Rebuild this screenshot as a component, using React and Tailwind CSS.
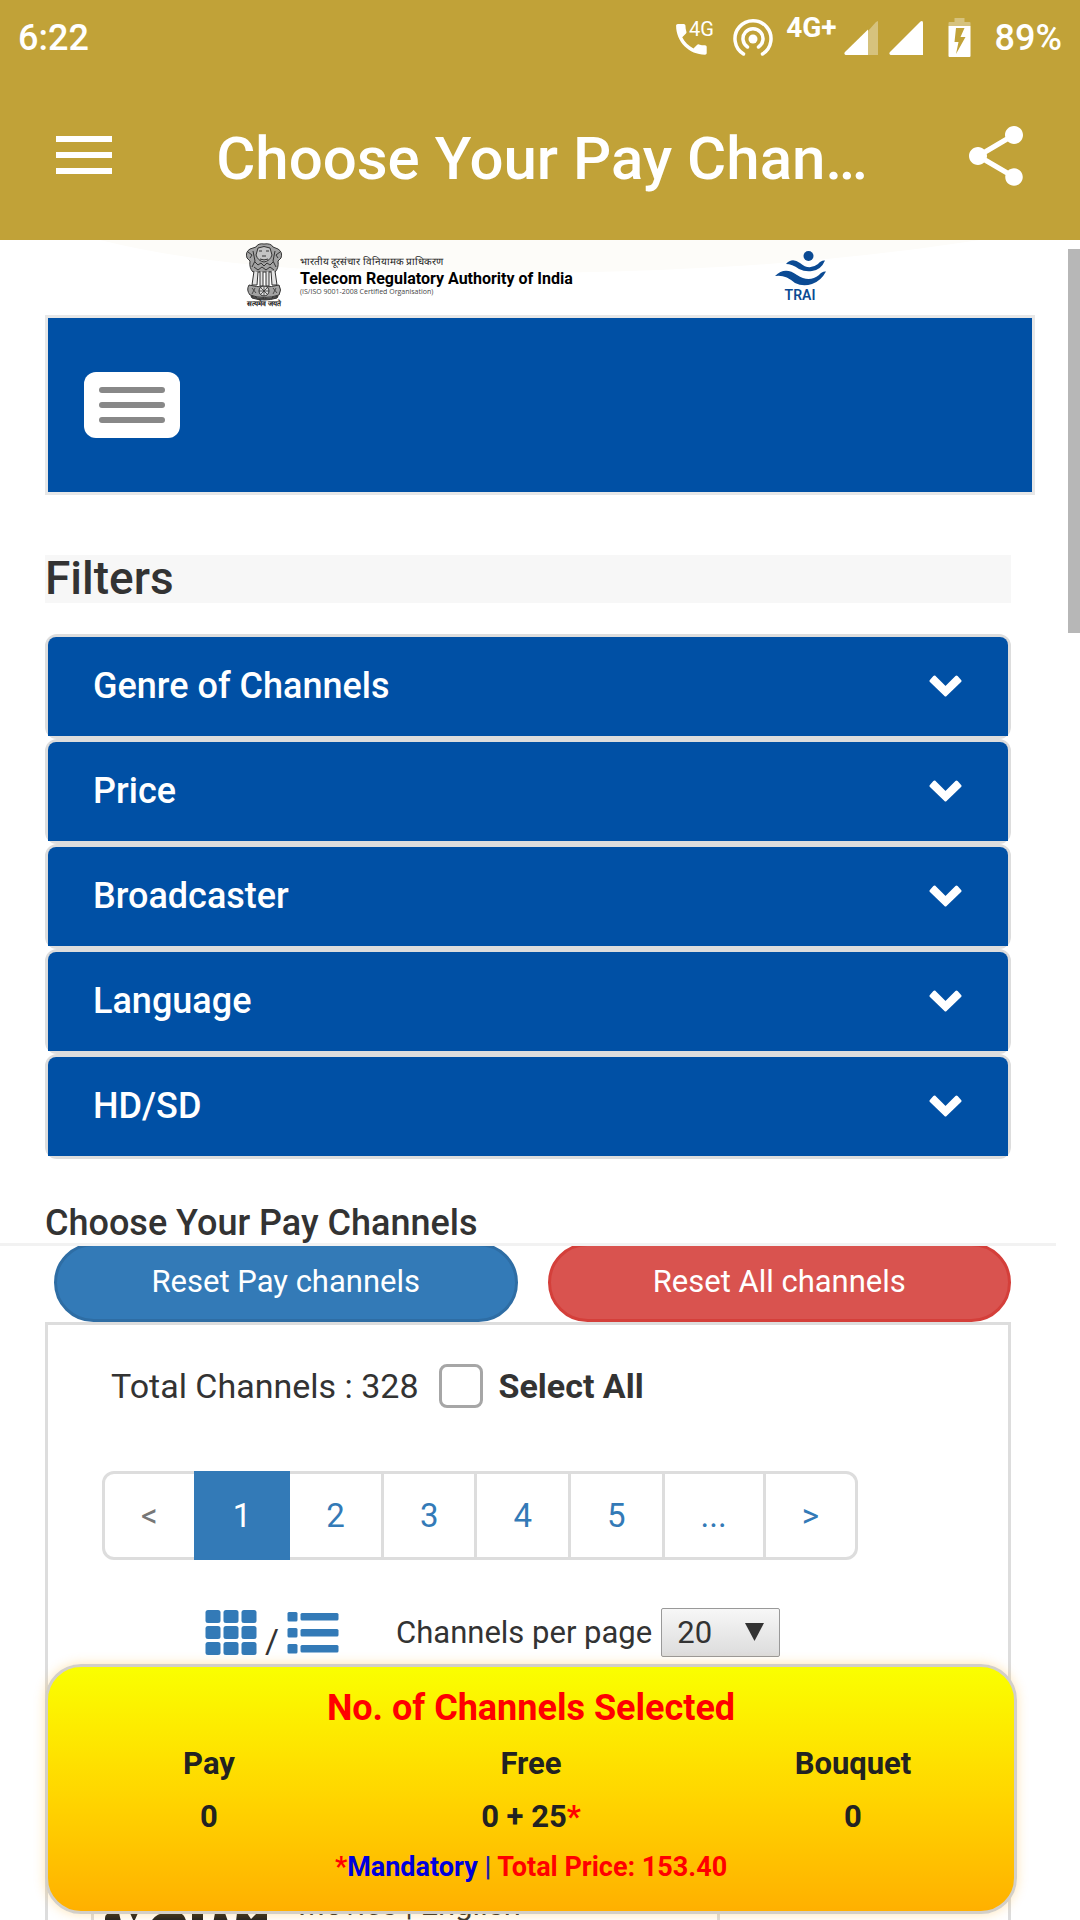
import React from "react";
import { MdShare, MdPhone } from "react-icons/md";

const filters = ["Genre of Channels", "Price", "Broadcaster", "Language", "HD/SD"];
const pages = ["<", "1", "2", "3", "4", "5", "...", ">"];
const counts = [
  { label: "Pay", value: "0" },
  { label: "Free", value: "0 + 25", mandatory: true },
  { label: "Bouquet", value: "0" },
];

function StatusBar() {
  return (
    <div className="flex h-[76px] items-center px-[18px] text-4xl font-medium text-white">
      <span>6:22</span>
      <div className="ml-auto flex items-center">
        <svg className="h-[40px] w-[40px]" viewBox="0 0 40 40" aria-hidden="true">
          <g transform="translate(-3 1) scale(1.7)">
            <MdPhone size={24} fill="#fff" />
          </g>
          <text x="15" y="18" fontSize="20" fontWeight="400" fill="#fff" fontFamily="Roboto, sans-serif">4G</text>
        </svg>
        <svg className="ml-[18px] h-[40px] w-[42px]" viewBox="0 0 42 40" fill="none" stroke="#fff" aria-hidden="true">
          <circle cx="21" cy="21" r="4.5" fill="#fff" stroke="none" />
          <path d="M11.5 36A18 18 0 1 1 30.500 36" strokeWidth="3.500" strokeLinecap="round" />
          <path d="M15.500 29A10 10 0 1 1 26.500 29" strokeWidth="3.500" strokeLinecap="round" />
        </svg>
        <span className="mb-5 ml-3 text-[28px] leading-[32px] font-bold">4G+</span>
        <svg className="ml-[7px] h-[36px] w-[34px]" viewBox="0 0 34 36" aria-hidden="true">
          <path d="M34 1V35H24V11L32 2Z" fill="#fff" fillOpacity=".35" />
          <path d="M24 9.500V35H1.500Q-.500 34 1 32Z" fill="#fff" />
        </svg>
        <svg className="ml-[11px] h-[36px] w-[34px]" viewBox="0 0 34 36" aria-hidden="true">
          <path d="M31.500 1.500Q34 0 34 3V35H1.500Q-.500 34 1 32Z" fill="#fff" />
        </svg>
        <svg className="ml-[25px] h-[40px] w-[23px]" viewBox="0 0 23 40" aria-hidden="true">
          <path d="M6.500 0H16.500V4H21.500Q22.500 4 22.500 5V8H.500V5Q.500 4 1.500 4H6.500Z" fill="#fff" fillOpacity=".35" />
          <path fillRule="evenodd" d="M.5 8H22.500V38Q22.500 39 21.500 39H1.500Q.500 39 .500 38ZM8 10 6.500 24H10.500L8 36 17.500 19H12.500L16.500 10Z" fill="#fff" />
        </svg>
        <span className="ml-6">89%</span>
      </div>
    </div>
  );
}

function AppBar() {
  return (
    <div className="flex h-[164px] items-center pr-12 pl-14 text-white">
      <button type="button" aria-label="Menu" className="mb-[6px] flex w-14 flex-col gap-[10px]">
        <span className="h-[6px] w-full bg-white" />
        <span className="h-[6px] w-full bg-white" />
        <span className="h-[6px] w-full bg-white" />
      </button>
      <h1 className="min-w-0 flex-1 pt-[2px] pl-3 text-center text-6xl leading-[72px] font-medium whitespace-nowrap">Choose Your Pay Chan…</h1>
      <button type="button" aria-label="Share" className="mb-1">
        <MdShare size={72} />
      </button>
    </div>
  );
}

function Emblem() {
  return (
    <svg className="h-[64px] w-[40px] shrink-0" viewBox="0 0 40 64" aria-hidden="true">
      <g fill="#a2a2a2" stroke="#333" strokeWidth="1">
        <path d="M12 4Q14 0 20 1Q27 0 29 4L34 6Q39 9 37 15L34 18Q35 25 31 29H9Q5 25 6 18L3 15Q1 9 6 6Z" />
        <path d="M14 5Q20 2 26 5L28 12Q26 18 20 19Q14 18 12 12Z" fill="#c4c4c4" />
        <path d="M15 8H18M22 8H25M18 13H22M16 16Q20 18 24 16" />
        <path d="M4 9 8 12 6 15M36 9 32 12 34 15M9 8 11 18 8 24M31 8 29 18 32 24" fill="none" />
        <path d="M11 19 14 22 17 20 20 23 23 20 26 22 29 19M10 24 14 27 18 24 22 27 26 24 30 27" fill="none" />
        <path d="M10 28 8 42H13L14 29M16 28V43H19V29M22 29V43H25V28M27 28 28 42H33L31 28" fill="#e2e2e2" />
        <path d="M5 42Q20 46 35 42Q38 47 35 52Q20 57 6 52Q2 47 5 42Z" />
        <circle cx="20" cy="48" r="5" fill="#ddd" />
        <path d="M20 43V53M15 48H25M16.500 44.500 23.500 51.500M23.500 44.500 16.500 51.500M8 45 12 50M11 45 8 51M29 45 33 50M32 45 29 51" strokeWidth=".8" />
        <path d="M7 53Q20 58 34 53L33 55Q20 59 8 55Z" fill="#555" />
      </g>
      <text x="20" y="63" fontSize="7" fontWeight="700" textAnchor="middle" fill="#111">सत्यमेव जयते</text>
    </svg>
  );
}

function SiteHeader() {
  return (
    <div className="relative flex h-[75px] items-start bg-white">
      <svg className="absolute inset-0 h-full w-full" viewBox="0 0 1080 75" preserveAspectRatio="none" aria-hidden="true">
        <path d="M100 0H980Q850 20 720 27Q560 36 400 32Q220 30 100 0Z" fill="#fdfcf9" />
      </svg>
      <div className="relative ml-[244px] flex items-start pt-[3px]">
        <Emblem />
        <div className="ml-4 whitespace-nowrap text-black">
          <p className="pt-[10px] text-[10px] leading-[18px] text-[#222]">भारतीय दूरसंचार विनियामक प्राधिकरण</p>
          <p className="text-[16px] leading-[16px] font-bold">Telecom Regulatory Authority of India</p>
          <p className="font-['Open_Sans'] text-[7px] leading-[10px] text-[#444]">(IS/ISO 9001-2008 Certified Organisation)</p>
        </div>
      </div>
      <svg className="relative ml-[200px] h-[64px] w-[56px] shrink-0" viewBox="0 0 56 64" fill="#0b4a93" role="img" aria-label="TRAI">
        <circle cx="35.500" cy="16" r="5" />
        <path d="M13 24Q19 17 27 23Q36 31 45 24Q48 20 52 20.500Q48 30 39 31Q32 32 26 29Q19 24 13 24Z" />
        <path d="M2 36Q12 26 24 35Q36 43 46 35Q49 31 53 31.500Q48 41 39 44Q30 47 22 43Q12 34 2 36Z" />
        <text x="27" y="60" fontSize="14" fontWeight="600" textAnchor="middle">TRAI</text>
      </svg>
    </div>
  );
}

function FilterPanel({ name }) {
  return (
    <button type="button" className="flex w-full rounded-xl border-[3px] border-[#ddd] text-left">
      <span className="flex h-[99px] w-full items-center rounded-t-lg bg-[#0050a5] pr-[46px] pb-[2px] pl-[45px] text-white">
        <span className="text-4xl leading-10 font-medium">{name}</span>
        <svg className="ml-auto h-[22px] w-[33px]" viewBox="0 0 33 22" fill="#fff" stroke="#fff" strokeWidth="3" strokeLinejoin="round" aria-hidden="true">
          <path d="M2 6 5.500 2 16.500 13 27.500 2 31 6 16.500 20Z" />
        </svg>
      </span>
    </button>
  );
}

function GridIcon() {
  return (
    <svg className="h-[45px] w-[52px]" viewBox="0 0 52 45" fill="#337ab7" aria-hidden="true">
      {[0, 16, 32].map((y) =>
        [0, 18, 36].map((x) => <rect key={x + "-" + y} x={x + 0.5} y={y} width="15" height="13" rx="2.500" />)
      )}
    </svg>
  );
}

function ListIcon() {
  return (
    <svg className="h-[45px] w-[52px]" viewBox="0 0 52 45" fill="#337ab7" aria-hidden="true">
      {[2, 18, 34].map((y) => (
        <g key={y}>
          <rect x="0.5" y={y} width="10" height="9.500" rx="1.500" />
          <rect x="13.500" y={y + 1} width="38" height="7.500" rx="1.500" />
        </g>
      ))}
    </svg>
  );
}

function Pagination() {
  return (
    <nav aria-label="Pages" className="mt-[63px] ml-[54px] flex text-[33px] leading-[47px] text-[#337ab7]">
      {pages.map((p) => {
        if (p === "1") {
          return (
            <a key={p} href="#page" aria-current="page" className="relative -ml-[3px] border-[3px] border-[#337ab7] bg-[#337ab7] px-9 py-[18px] text-white">{p}</a>
          );
        }
        if (p === "<") {
          return (
            <a key={p} href="#page" className="rounded-l-xl border-[3px] border-[#ddd] px-9 py-[18px] text-[#777]">{p}</a>
          );
        }
        return (
          <a key={p} href="#page" className="-ml-[3px] border-[3px] border-[#ddd] px-9 py-[18px] last:rounded-r-xl">{p}</a>
        );
      })}
    </nav>
  );
}

function ChannelList() {
  return (
    <section className="mr-[69px] ml-[45px] border-[3px] border-[#ddd] text-[#333]">
      <div className="flex items-center pt-[39px] pl-[63px] text-[34px] leading-[44px]">
        <span>Total Channels : 328</span>
        <label className="ml-5 flex items-center font-bold">
          <input type="checkbox" className="mr-4 h-[44px] w-[44px] appearance-none rounded-lg border-[3px] border-[#a6a6a6] bg-white" />
          Select All
        </label>
      </div>
      <Pagination />
      <div className="mt-12 flex h-[49px] items-center pl-[157px] text-[31px]">
        <button type="button" aria-label="Grid view"><GridIcon /></button>
        <span className="mx-2 pt-4 text-[34px] leading-10">/</span>
        <button type="button" aria-label="List view"><ListIcon /></button>
        <label htmlFor="per-page" className="ml-[57px] pt-[2px]">Channels per page</label>
        <div className="relative ml-[9px]">
          <select id="per-page" defaultValue="20" className="h-[49px] w-[119px] appearance-none rounded-xs border border-[#999] bg-gradient-to-b from-[#f7f7f7] to-[#dcdcdc] pl-[15px] text-[31px] leading-10 text-[#333]">
            <option>20</option>
            <option>50</option>
          </select>
          <svg className="pointer-events-none absolute top-[15px] right-4 h-[18px] w-[19px]" viewBox="0 0 19 18" fill="#333" aria-hidden="true">
            <path d="M0 0H19L9.500 18Z" />
          </svg>
        </div>
      </div>
      <article className="mt-[120px] mr-[288px] ml-[43px] flex border-[3px] border-[#ddd] pl-[11px]">
        <svg className="h-[150px] w-[162px]" viewBox="0 0 162 150" aria-hidden="true">
          <path d="M0 138Q0 133 7 133H14L18 150H0ZM25 133H33L29 142ZM42 150Q48 133 60 133H74Q82 134 82 150ZM87 133H98V150H87ZM110 133H120L126 150H107ZM132 133H142L146 139 152 133H162V150H130Z" fill="#222" />
        </svg>
        <p className="mt-[105px] ml-[31px] text-[31px] leading-10">Movies | English</p>
      </article>
    </section>
  );
}

function SelectionSummary() {
  return (
    <aside className="absolute bottom-[6px] left-[45px] w-9/10 rounded-[36px] border-[3px] border-[#d3cfc8] bg-gradient-to-b from-[#faff00] to-[#ffb000] pt-[21px] pb-6 text-center font-bold text-[#222] shadow-[0_0_12px_rgba(255,165,0,0.3)]">
      <h2 className="text-4xl leading-10 text-[#f00]">No. of Channels Selected</h2>
      <div className="mt-4 grid grid-cols-3 text-[31px] leading-10">
        {counts.map((c) => (
          <div key={c.label}>
            <p>{c.label}</p>
            <p className="mt-[13px]">
              {c.value}
              {c.mandatory && <span className="text-[#f00]">*</span>}
            </p>
          </div>
        ))}
      </div>
      <p className="mt-[10px] text-[27px] leading-10 text-[#f00]">
        *<span className="text-[#00d]">Mandatory</span> <span className="text-[#22a]">|</span> Total Price: 153.40
      </p>
    </aside>
  );
}

export default function App() {
  return (
    <div className="relative flex h-screen flex-col overflow-hidden bg-white font-['Roboto',sans-serif]">
      <header className="shrink-0 bg-[#c1a238]">
        <StatusBar />
        <AppBar />
      </header>
      <main className="relative min-h-0 flex-1 overflow-hidden text-[#333]">
        <SiteHeader />
        <nav className="mx-[45px] flex h-[180px] items-center border-[3px] border-[#e7e7e7] bg-[#0050a5] pl-9">
          <button type="button" aria-label="Toggle navigation" className="flex h-[66px] w-24 flex-col items-center justify-center gap-[9px] rounded-xl bg-white">
            <span className="h-[6px] w-[66px] rounded-full bg-[#888]" />
            <span className="h-[6px] w-[66px] rounded-full bg-[#888]" />
            <span className="h-[6px] w-[66px] rounded-full bg-[#888]" />
          </button>
        </nav>
        <section className="mr-[69px] ml-[45px]">
          <h2 className="mt-[60px] bg-[#f7f7f7] pb-[2px] text-[46px] leading-[46px] font-medium">Filters</h2>
          <div className="mt-[31px]">
            {filters.map((f) => (
              <FilterPanel key={f} name={f} />
            ))}
          </div>
          <h2 className="mt-[44px] text-4xl leading-10 font-medium">Choose Your Pay Channels</h2>
        </section>
        <div className="mr-6 border-t-[3px] border-[#f2f2f2]" />
        <div className="mr-[69px] ml-[54px] flex h-[76px] items-end gap-[30px] overflow-hidden text-[31px] leading-10 text-white">
          <button type="button" className="h-[79px] flex-1 rounded-full border-[3px] border-[#2e6da4] bg-[#337ab7] pb-[2px]">Reset Pay channels</button>
          <button type="button" className="h-[79px] flex-1 rounded-full border-[3px] border-[#d43f3a] bg-[#d9534f] pb-[2px]">Reset All channels</button>
        </div>
        <ChannelList />
        <div className="absolute top-[9px] right-0 h-[384px] w-3 bg-[#b7b7b7]" />
      </main>
      <SelectionSummary />
    </div>
  );
}
